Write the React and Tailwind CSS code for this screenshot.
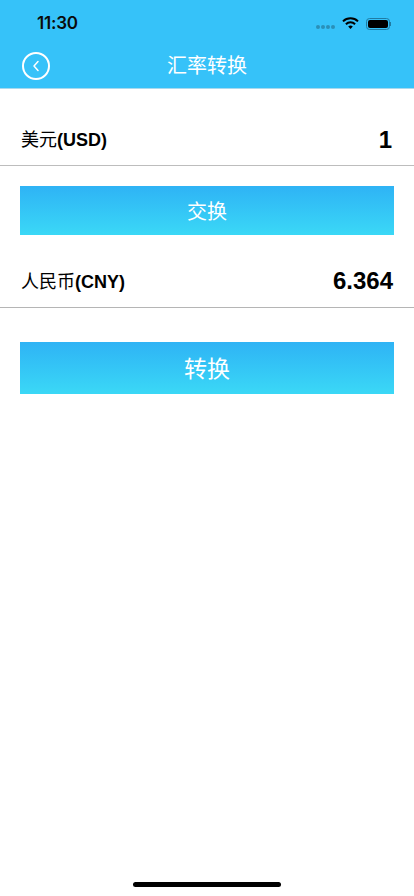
export default function App() {
  const font = 'font-["Liberation_Sans","Noto_Sans_CJK_SC",sans-serif]';
  return (
    <div className={`w-[414px] h-[896px] bg-white flex flex-col relative overflow-hidden text-black ${font}`}>
      <header className="h-[89px] shrink-0 bg-[#36c2f9] border-b border-[#a9d9ee] flex flex-col">
        <div className="h-[44px] pt-[14px] pl-[37px] pr-[23px] flex justify-between items-start">
          <span className="text-[17px] leading-[18px] font-semibold font-['Inter',sans-serif] text-[#0a0a0a] tracking-[-0.2px]">11:30</span>
          <div className="flex items-center gap-[7px] pt-[3px]">
            <div className="flex gap-[1px] mt-[7px]">
              <span className="w-[4px] h-[4px] rounded-full bg-[#2a8fb9]"></span>
              <span className="w-[4px] h-[4px] rounded-full bg-[#2a8fb9]"></span>
              <span className="w-[4px] h-[4px] rounded-full bg-[#2a8fb9]"></span>
              <span className="w-[4px] h-[4px] rounded-full bg-[#2a8fb9]"></span>
            </div>
            <svg width="17" height="13" viewBox="0 0 17 13">
              <path d="M1 4.4 A10.8 10.8 0 0 1 16 4.4" fill="none" stroke="#000" strokeWidth="2" />
              <path d="M3.9 7.2 A6.6 6.6 0 0 1 13.1 7.2" fill="none" stroke="#000" strokeWidth="2" />
              <path d="M6.2 9.6 A3.2 3.2 0 0 1 10.8 9.6 L8.5 12 Z" fill="#000" />
            </svg>
            <div className="flex items-center">
              <div className="w-[24px] h-[12px] rounded-[3.5px] border border-[#1f7ba3] p-[1px]">
                <div className="w-full h-full rounded-[2px] bg-black"></div>
              </div>
              <span className="w-[1px] h-[4px] bg-[#1f7ba3]"></span>
            </div>
          </div>
        </div>
        <div className="flex-1 flex items-center relative justify-center">
          <div className="absolute left-[22px] top-[8px] w-[28px] h-[28px] rounded-full border-2 border-white flex items-center justify-center">
            <svg width="8" height="12" viewBox="0 0 8 12">
              <path d="M6 1.5 L2 6 L6 10.5" fill="none" stroke="#fff" strokeWidth="1.5" strokeLinecap="round" strokeLinejoin="round" />
            </svg>
          </div>
          <h1 className="text-[20px] leading-[28px] font-normal text-white">汇率转换</h1>
        </div>
      </header>

      <div className="h-[77px] flex items-end justify-between pl-[21px] pr-[20px] pb-[12px] border-b border-[#bdbdbd] shrink-0">
        <span className="text-[18px] leading-[26px]">美元<b className="font-bold">(USD)</b></span>
        <span className="text-[24px] leading-[28px] font-bold pr-[2px] mb-[-1px]">1</span>
      </div>

      <button className="mt-[20px] mx-[20px] h-[49px] pt-[2px] shrink-0 bg-gradient-to-b from-[#2fb3f5] to-[#3bd8f6] text-white text-[20px] font-normal">交换</button>

      <div className="h-[73px] flex items-end justify-between pl-[21px] pr-[21px] pb-[12px] border-b border-[#b5b5b5] shrink-0">
        <span className="text-[18px] leading-[26px]">人民币<b className="font-bold">(CNY)</b></span>
        <span className="text-[24px] leading-[28px] font-bold">6.364</span>
      </div>

      <button className="mt-[34px] mx-[20px] h-[52px] pt-[2px] shrink-0 bg-gradient-to-b from-[#2fb3f5] to-[#3bd8f6] text-white text-[23px] font-normal">转换</button>

      <div className="absolute left-[133px] bottom-[9px] w-[148px] h-[5px] rounded-full bg-black"></div>
    </div>
  );
}
